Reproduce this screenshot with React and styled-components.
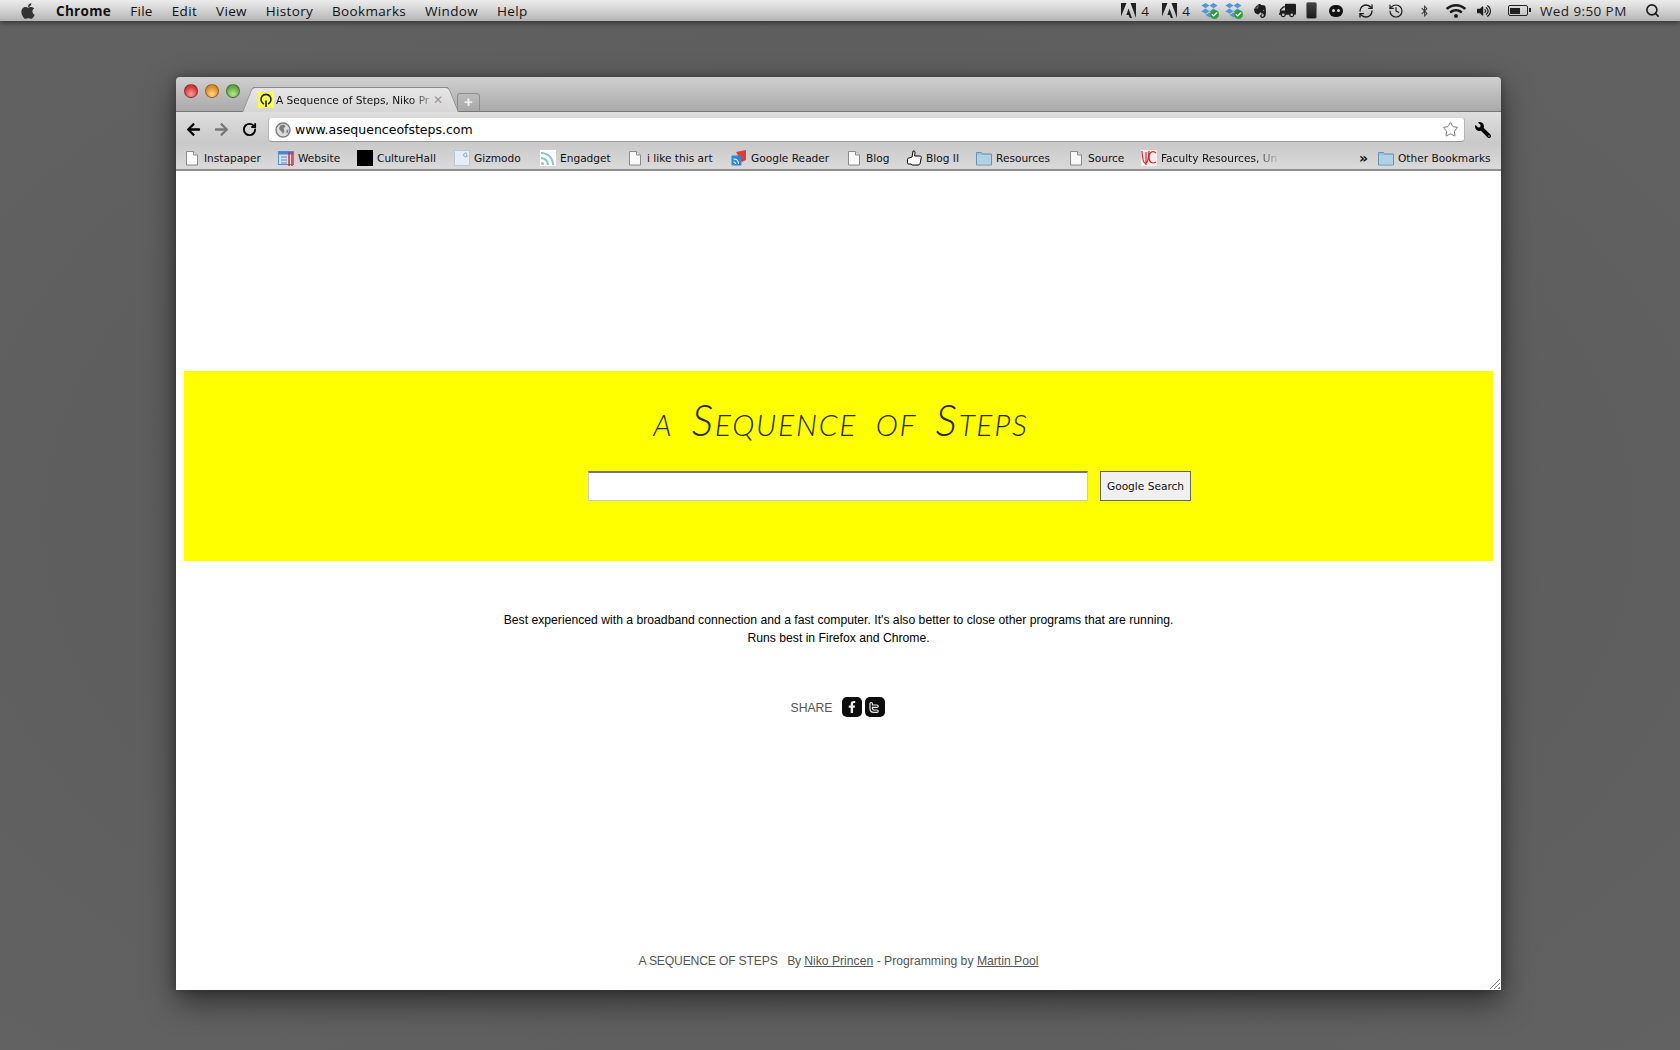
import { createGlobalStyle, styled } from 'styled-components';
import { FaApple, FaArrowLeft, FaArrowRight, FaWrench, FaBluetoothB, FaWifi, FaVolumeUp, FaFacebookF, FaEvernote, FaTruck } from 'react-icons/fa';
import { RotateCw, RefreshCw, History, Star, Check, Search } from 'lucide-react';

const GlobalStyle = createGlobalStyle`
  html, body { margin: 0; height: 100%; background: #5f5f5f; overflow: hidden; }
  * { box-sizing: border-box; }
`;

const Desktop = styled.div`
  width: 1680px;
  height: 1050px;
  display: flex;
  flex-direction: column;
  background: radial-gradient(ellipse at 50% 50%, #575757 0%, #5f5f5f 70%, #626262 100%);
  font-family: "DejaVu Sans", sans-serif;
`;

const MenuBar = styled.div`
  height: 21px;
  flex: none;
  display: flex;
  align-items: center;
  justify-content: space-between;
  padding: 0 20px 0 19px;
  background: linear-gradient(to bottom, #ececec 0%, #d8d8d8 40%, #b4b4b4 100%);
  box-shadow: 0 2px 5px rgba(0, 0, 0, 0.45);
  color: #111;
  font-size: 13.5px;
  font-family: "Open Sans", sans-serif;
`;

const MenuLeft = styled.div`
  display: flex;
  align-items: center;
  gap: 19px;
`;

const MenuItem = styled.span`
  font-weight: ${(p) => (p.$bold ? 700 : 400)};
  letter-spacing: 0.32px;
`;

const Tray = styled.div`
  display: flex;
  align-items: center;
  height: 100%;
  color: #1c1c1c;
`;

const TraySlot = styled.span`
  display: flex;
  align-items: center;
  justify-content: center;
  gap: 5px;
  width: ${(p) => p.$w}px;
  margin-right: ${(p) => p.$gap}px;
  font-size: 13.5px;
`;

const DropboxWrap = styled.span`
  position: relative;
  width: 17px;
  height: 17px;
  display: block;
`;

const DropCheck = styled.span`
  position: absolute;
  right: -1px;
  bottom: 0;
  width: 9px;
  height: 9px;
  border-radius: 50%;
  background: #2f9e3c;
  color: #fff;
  display: flex;
  align-items: center;
  justify-content: center;
`;

const Phone = styled.span`
  width: 11px;
  height: 17px;
  border-radius: 2px;
  background: linear-gradient(to bottom, #444, #1a1a1a);
  border: 1px solid #777;
`;

const Blob = styled.span`
  width: 14px;
  height: 12px;
  border-radius: 7px;
  background: #111;
  display: flex;
  align-items: center;
  justify-content: center;
  gap: 2px;
  &::before, &::after {
    content: '';
    width: 3px;
    height: 3px;
    background: #ddd;
    border-radius: 50%;
  }
`;

const Battery = styled.span`
  position: relative;
  width: 20px;
  height: 11px;
  border: 1.5px solid #222;
  border-radius: 2px;
  padding: 1.5px;
  &::before {
    content: '';
    display: block;
    width: 10px;
    height: 100%;
    background: #222;
  }
  &::after {
    content: '';
    position: absolute;
    right: -4px;
    top: 2px;
    width: 2px;
    height: 4px;
    background: #222;
  }
`;

const Clock = styled.span`
  width: 90px;
  margin-right: 15px;
  white-space: nowrap;
  letter-spacing: 0.4px;
`;

const BrowserWindow = styled.div`
  width: 1325px;
  height: 913px;
  margin: 56px 0 0 176px;
  flex: none;
  display: flex;
  flex-direction: column;
  position: relative;
  border-radius: 4px 4px 0 0;
  box-shadow: 0 12px 30px rgba(0, 0, 0, 0.5), 0 0 10px rgba(0, 0, 0, 0.3);
`;

const TabStrip = styled.div`
  height: 35px;
  flex: none;
  display: flex;
  align-items: flex-end;
  position: relative;
  padding-left: 77px;
  background: linear-gradient(to bottom, #d0d0d0, #a9a9a9);
  border-radius: 4px 4px 0 0;
  border-bottom: 1px solid #777;
`;

const Lights = styled.div`
  position: absolute;
  left: 8px;
  top: 7px;
  display: flex;
  gap: 7px;
`;

const Light = styled.span`
  width: 14px;
  height: 14px;
  border-radius: 50%;
  border: 1px solid rgba(0, 0, 0, 0.35);
  background: radial-gradient(circle at 50% 75%, ${(p) => p.$glow} 0%, ${(p) => p.$base} 65%);
`;

const Tab = styled.div`
  width: 195px;
  height: 25px;
  margin-bottom: -1px;
  display: flex;
  align-items: center;
  padding: 0 5px;
  position: relative;
  z-index: 1;
  background: linear-gradient(to bottom, #e6e6e6, #d6d6d6);
  border-top: 1px solid #8c8c8c;
  font-size: 10.6px;
  color: #111;
  &::before, &::after {
    content: '';
    position: absolute;
    top: -1px;
    bottom: 0;
    width: 14px;
    z-index: -1;
    background: linear-gradient(to bottom, #e6e6e6, #d6d6d6);
    border-top: 1px solid #8c8c8c;
  }
  &::before {
    left: -6px;
    border-left: 1px solid #8c8c8c;
    border-radius: 4px 0 0 0;
    transform: skewX(-22deg);
  }
  &::after {
    right: -6px;
    border-right: 1px solid #8c8c8c;
    border-radius: 0 4px 0 0;
    transform: skewX(22deg);
  }
`;

const Favicon = styled.span`
  width: 16px;
  height: 16px;
  flex: none;
  margin-right: 2px;
  background: #fdfd4e;
  display: flex;
  align-items: center;
  justify-content: center;
`;

const TabTitle = styled.span`
  flex: 1;
  white-space: nowrap;
  -webkit-mask-image: linear-gradient(to right, #000 85%, rgba(0, 0, 0, 0.25) 100%);
  mask-image: linear-gradient(to right, #000 85%, rgba(0, 0, 0, 0.25) 100%);
`;

const TabClose = styled.span`
  color: #999;
  font-size: 12px;
  font-weight: 700;
`;

const NewTab = styled.span`
  width: 23px;
  height: 18px;
  margin: 0 0 0 9px;
  background: linear-gradient(to bottom, #bcbcbc, #a8a8a8);
  border: 1px solid #8e8e8e;
  border-bottom: none;
  border-radius: 3px 4px 0 0;
  color: #f2f2f2;
  font: 700 15px/15px "Liberation Sans", sans-serif;
  text-align: center;
`;

const Toolbar = styled.div`
  height: 30px;
  flex: none;
  display: flex;
  align-items: center;
  padding: 5px 10px 0;
  background: linear-gradient(to bottom, #dedede, #c9c9c9);
`;

const NavButton = styled.span`
  display: flex;
  width: 15px;
  margin-right: 13px;
  justify-content: center;
  color: ${(p) => p.$color || '#000'};
`;

const UrlBox = styled.div`
  width: 1197px;
  height: 25px;
  margin-left: -2px;
  display: flex;
  align-items: center;
  padding: 0 5px 0 6px;
  background: #fff;
  border: 1px solid #b5b5b5;
  border-top-color: #d8d8d8;
  border-bottom-color: #999;
  border-radius: 4px;
`;

const UrlText = styled.span`
  flex: 1;
  margin-left: 4px;
  font-size: 12.5px;
  color: #000;
`;

const WrenchSlot = styled.span`
  display: flex;
  margin-left: 10px;
  color: #000;
  transform: scaleX(-1);
`;

const BookmarksBar = styled.div`
  height: 29px;
  flex: none;
  display: flex;
  align-items: center;
  padding: 4px 10px 0 8px;
  background: linear-gradient(to bottom, #c9c9c9, #dadada);
  border-bottom: 2px solid #8f8f8f;
  font-size: 10.6px;
  color: #111;
`;

const Bookmark = styled.span`
  display: flex;
  align-items: center;
  gap: 4px;
  flex: none;
  width: ${(p) => p.$w}px;
  white-space: nowrap;
  > svg { flex: none; }
`;

const FadedLabel = styled.span`
  white-space: nowrap;
  -webkit-mask-image: linear-gradient(to right, #000 80%, rgba(0, 0, 0, 0.15) 100%);
  mask-image: linear-gradient(to right, #000 80%, rgba(0, 0, 0, 0.15) 100%);
`;

const Chevron = styled.span`
  margin-left: auto;
  margin-right: 10px;
  font-size: 14px;
  font-weight: 700;
  line-height: 1;
`;

const Page = styled.div`
  flex: 1;
  display: flex;
  flex-direction: column;
  align-items: center;
  padding: 200px 8px 0;
  background: #fff;
  position: relative;
  font-family: "Liberation Sans", sans-serif;
`;

const Banner = styled.div`
  width: 1309px;
  height: 190px;
  flex: none;
  background: #ffff00;
  display: flex;
  flex-direction: column;
  align-items: center;
  padding-top: 24px;
`;

const Title = styled.h1`
  margin: 0 0 0 5px;
  height: 76px;
  font-family: Lato, sans-serif;
  font-weight: 300;
  font-style: italic;
  font-variant: small-caps;
  font-size: 43px;
  line-height: 50px;
  letter-spacing: 1.7px;
  word-spacing: 6px;
  color: #2a2a1a;
`;

const SearchRow = styled.form`
  display: flex;
  gap: 12px;
  margin-left: 102px;
`;

const SearchInput = styled.input`
  width: 500px;
  height: 30px;
  padding: 0 4px;
  background: #fff;
  border: 1px solid #ccc;
  border-top: 2px solid #777;
  outline: none;
`;

const SearchButton = styled.button`
  width: 91px;
  height: 30px;
  padding: 0;
  background: #f0f0f0;
  border: 1px solid #666;
  font: 10.6px "DejaVu Sans", sans-serif;
  color: #111;
`;

const Notice = styled.p`
  margin: 50px 0 0;
  font-size: 12.2px;
  line-height: 18px;
  text-align: center;
  color: #000;
`;

const ShareRow = styled.div`
  margin-top: 50px;
  margin-right: 2px;
  display: flex;
  align-items: center;
  gap: 3px;
  font-size: 12.2px;
  color: #555;
`;

const ShareLabel = styled.span`
  margin-right: 6px;
  padding-top: 2px;
`;

const ShareButton = styled.span`
  width: 20px;
  height: 20px;
  border-radius: 5px;
  background: #0d0d0d;
  color: #eee;
  display: flex;
  align-items: center;
  justify-content: center;
`;

const Footer = styled.div`
  margin-top: auto;
  padding-bottom: 22px;
  font-size: 12.2px;
  color: #555;
  white-space: pre;
  a { color: #555; }
`;

const FooterText = styled.span`
  letter-spacing: ${(p) => p.$track}px;
`;

const Grip = styled.span`
  position: absolute;
  right: 1px;
  bottom: 1px;
  width: 11px;
  height: 11px;
  background: repeating-linear-gradient(135deg, transparent 0 2px, #888 2px 3px);
  clip-path: polygon(100% 0, 100% 100%, 0 100%);
`;

// little bookmark favicons
const PageIcon = () => (
  <svg width="16" height="16" viewBox="0 0 16 16">
    <path d="M2.5 1.500h7L13.500 5v10h-11z" fill="#fafafa" stroke="#8a8a8a" />
    <path d="M9.500 1.500V5h4" fill="#e4e4e4" stroke="#8a8a8a" />
  </svg>
);

const FolderIcon = () => (
  <svg width="16" height="16" viewBox="0 0 16 16">
    <path d="M.5 2.500h5l1 1.500h9v11H.5z" fill="#9cc3dc" stroke="#6b93ad" />
    <rect x="1" y="5" width="14" height="9.500" fill="#b0d2e6" />
  </svg>
);

const WebsiteIcon = () => (
  <svg width="16" height="16" viewBox="0 0 16 16">
    <rect x="0.5" y="1.5" width="15" height="13" fill="#cfe2f5" stroke="#5b8fc9" />
    <rect x="0.5" y="1.5" width="15" height="3" fill="#4a86d0" />
    <path d="M3 7h6M3 10h6M3 13h6" stroke="#5b8fc9" />
    <path d="M11 2v14M14 2v14" stroke="#e8262a" strokeWidth="1.5" />
  </svg>
);

const GizmodoIcon = () => (
  <svg width="16" height="16" viewBox="0 0 16 16">
    <rect x="0.5" y="0.5" width="15" height="15" fill="#e6eef5" stroke="#b8c8d6" />
    <path d="M13 3.500a2 2 0 1 0 0 3V5h-1" fill="none" stroke="#8aa2b8" />
  </svg>
);

const FeedIcon = () => (
  <svg width="16" height="16" viewBox="0 0 16 16">
    <rect width="16" height="16" fill="#fff" />
    <path d="M1 3c7 0 12 5 12 12M1 8c4 0 7 3 7 7" fill="none" stroke="#8cc4c8" strokeWidth="2" />
    <circle cx="2.5" cy="13.5" r="1.5" fill="#8cc4c8" />
  </svg>
);

const ReaderIcon = () => (
  <svg width="16" height="16" viewBox="0 0 16 16">
    <path d="M5 2l10-2v10l-4 2z" fill="#e23c2e" />
    <rect x="0.5" y="5.5" width="10" height="10" rx="1" fill="#2d86d6" />
    <path d="M2.500 9c3 0 5 2 5 5M2.500 12c1.200 0 2 .8 2 2" fill="none" stroke="#fff" strokeWidth="1.2" />
  </svg>
);

const HandIcon = () => (
  <svg width="16" height="16" viewBox="0 0 16 16">
    <path d="M6 7l1-6c1.600-.4 2.200.6 2 2L8.600 6H14c1.200 0 1.400 1 1.200 2l-1 5c-.2 1.200-1 2-2 2H6.500L5 14H2.500c-1 0-1-1-1-2V9.500c0-1 .6-1.500 1.500-1.500z" fill="#fff" stroke="#000" />
  </svg>
);

const UniversityIcon = () => (
  <svg width="16" height="16" viewBox="0 0 16 16">
    <rect width="16" height="16" fill="#fdeeee" />
    <path d="M1 1c.5 9 1.500 12.500 3.500 12.500S7.500 10 8 1M15 3c-3-3-7-1-7 4.500S12 14 15 12M5 15V2" fill="none" stroke="#d8232a" strokeWidth="1.2" />
  </svg>
);

const GlobeIcon = () => (
  <svg width="16" height="16" viewBox="0 0 16 16" style={{ flex: 'none' }}>
    <circle cx="8" cy="8" r="7" fill="#dcdcdc" stroke="#7d7d7d" strokeWidth="1.4" />
    <path d="M5 3.500l4-1 1.500 2-2 2 1 2.500-1.500 3-2-3-2-2zM11.500 8l2-.5-.5 3-1.500 1z" fill="#7d7d7d" />
  </svg>
);

const AdobeIcon = () => (
  <svg width="15" height="15" viewBox="0 0 15 15">
    <path d="M0 0h5.500L0 13.500zM9.500 0H15v15z" fill="#222" />
    <path d="M7.500 5.500L11 15H8.800L7.700 12H5.400z" fill="#222" />
  </svg>
);

const DropboxIcon = () => (
  <DropboxWrap>
    <svg width="17" height="17" viewBox="0 0 17 17">
      <path d="M4.500 1l4 2.600-4 2.600-4-2.600zM12.500 1l4 2.600-4 2.600-4-2.600zM4.500 6.600l4 2.600-4 2.600-4-2.600zM12.500 6.600l4 2.600-4 2.600-4-2.600zM4.500 13l4-2.400 4 2.400-4 2.600z" fill="#4f97d8" />
    </svg>
    <DropCheck><Check size={7} strokeWidth={4} /></DropCheck>
  </DropboxWrap>
);

const TwitterGlyph = () => (
  <svg width="13" height="13" viewBox="0 0 13 13" fill="none" stroke="currentColor" strokeWidth="1.2">
    <path d="M3 1.500c1 0 1.500.6 1.500 1.500v1h4.500c1.600 0 1.600 2.400 0 2.400H4.500v1.200c0 1 .6 1.400 1.500 1.400h3c1.600 0 1.600 2.400 0 2.400H6C3.500 11.400 2 10 2 7.800V2.500c0-.6.4-1 1-1z" />
  </svg>
);

const bookmarks = [
  { label: 'Instapaper', icon: <PageIcon />, w: 94 },
  { label: 'Website', icon: <WebsiteIcon />, w: 79 },
  { label: 'CultureHall', icon: <svg width="16" height="16"><rect width="16" height="16" fill="#000" /></svg>, w: 97 },
  { label: 'Gizmodo', icon: <GizmodoIcon />, w: 86 },
  { label: 'Engadget', icon: <FeedIcon />, w: 87 },
  { label: 'i like this art', icon: <PageIcon />, w: 104 },
  { label: 'Google Reader', icon: <ReaderIcon />, w: 115 },
  { label: 'Blog', icon: <PageIcon />, w: 60 },
  { label: 'Blog II', icon: <HandIcon />, w: 70 },
  { label: 'Resources', icon: <FolderIcon />, w: 92 },
  { label: 'Source', icon: <PageIcon />, w: 73 },
];

const menus = ['File', 'Edit', 'View', 'History', 'Bookmarks', 'Window', 'Help'];

function App() {
  return (
    <Desktop>
      <GlobalStyle />
      <MenuBar>
        <MenuLeft>
          <FaApple size={18} color="#333" />
          <MenuItem $bold>Chrome</MenuItem>
          {menus.map((m) => (
            <MenuItem key={m}>{m}</MenuItem>
          ))}
        </MenuLeft>
        <Tray>
          <TraySlot $w={28} $gap={13}><AdobeIcon />4</TraySlot>
          <TraySlot $w={28} $gap={11}><AdobeIcon />4</TraySlot>
          <TraySlot $w={17} $gap={7}><DropboxIcon /></TraySlot>
          <TraySlot $w={17} $gap={11}><DropboxIcon /></TraySlot>
          <TraySlot $w={14} $gap={11}><FaEvernote size={16} /></TraySlot>
          <TraySlot $w={18} $gap={10}><FaTruck size={17} style={{ transform: 'scaleX(-1)' }} /></TraySlot>
          <TraySlot $w={11} $gap={12}><Phone /></TraySlot>
          <TraySlot $w={14} $gap={15}><Blob /></TraySlot>
          <TraySlot $w={16} $gap={14}><RefreshCw size={16} strokeWidth={2} /></TraySlot>
          <TraySlot $w={16} $gap={16}><History size={16} strokeWidth={1.8} /></TraySlot>
          <TraySlot $w={9} $gap={16}><FaBluetoothB size={12} color="#333" /></TraySlot>
          <TraySlot $w={22} $gap={10}><FaWifi size={20} /></TraySlot>
          <TraySlot $w={14} $gap={16}><FaVolumeUp size={14} /></TraySlot>
          <TraySlot $w={21} $gap={12}><Battery /></TraySlot>
          <Clock>Wed 9:50 PM</Clock>
          <Search size={15} strokeWidth={2.6} />
        </Tray>
      </MenuBar>

      <BrowserWindow>
        <TabStrip>
          <Lights>
            <Light $base="#d8383a" $glow="#ff9a9a" />
            <Light $base="#e08a2a" $glow="#ffd77e" />
            <Light $base="#62a843" $glow="#bce68e" />
          </Lights>
          <Tab>
            <Favicon>
              <svg width="14" height="14" viewBox="0 0 14 14" fill="none" stroke="#222" strokeWidth="1.6">
                <path d="M5 11A5 5 0 1 1 9 11M7 7.500V14" />
              </svg>
            </Favicon>
            <TabTitle>A Sequence of Steps, Niko Pr</TabTitle>
            <TabClose>✕</TabClose>
          </Tab>
          <NewTab>+</NewTab>
        </TabStrip>

        <Toolbar>
          <NavButton><FaArrowLeft size={15} /></NavButton>
          <NavButton $color="#777"><FaArrowRight size={15} /></NavButton>
          <NavButton><RotateCw size={15} strokeWidth={3} /></NavButton>
          <UrlBox>
            <GlobeIcon />
            <UrlText>www.asequenceofsteps.com</UrlText>
            <Star size={17} color="#777" strokeWidth={1.4} />
          </UrlBox>
          <WrenchSlot><FaWrench size={16} /></WrenchSlot>
        </Toolbar>

        <BookmarksBar>
          {bookmarks.map((b) => (
            <Bookmark key={b.label} $w={b.w}>
              {b.icon}
              {b.label}
            </Bookmark>
          ))}
          <Bookmark $w={140}>
            <UniversityIcon />
            <FadedLabel>Faculty Resources, Un</FadedLabel>
          </Bookmark>
          <Chevron>»</Chevron>
          <Bookmark $w={113}>
            <FolderIcon />
            Other Bookmarks
          </Bookmark>
        </BookmarksBar>

        <Page>
          <Banner>
            <Title>a Sequence of Steps</Title>
            <SearchRow onSubmit={(e) => e.preventDefault()}>
              <SearchInput type="text" />
              <SearchButton type="button">Google Search</SearchButton>
            </SearchRow>
          </Banner>
          <Notice>
            Best experienced with a broadband connection and a fast computer. It's also better to close other programs that are running.
            <br />
            Runs best in Firefox and Chrome.
          </Notice>
          <ShareRow>
            <ShareLabel>SHARE</ShareLabel>
            <ShareButton><FaFacebookF size={12} /></ShareButton>
            <ShareButton><TwitterGlyph /></ShareButton>
          </ShareRow>
          <Footer>
            <FooterText $track={-0.2}>{'A SEQUENCE OF STEPS   By '}</FooterText>
            <a href="#niko">Niko Princen</a>
            <FooterText $track={0}>{' - Programming by '}</FooterText>
            <a href="#martin">Martin Pool</a>
          </Footer>
          <Grip />
        </Page>
      </BrowserWindow>
    </Desktop>
  );
}

export default App;
